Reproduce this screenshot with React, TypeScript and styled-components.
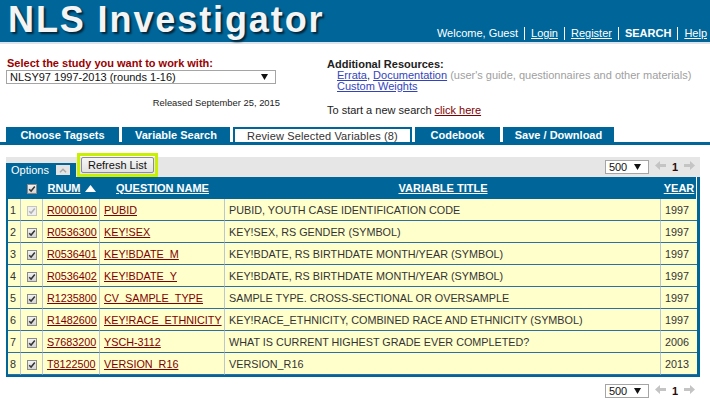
import React from "react";
import styled, { createGlobalStyle } from "styled-components";

const BLUE = "#006699";

const GlobalStyle = createGlobalStyle`
  *, *::before, *::after { box-sizing: border-box; }
  html, body { margin: 0; padding: 0; background: #fff; }
  body {
    font-family: "Liberation Sans", Arial, Helvetica, sans-serif;
    font-size: 11px;
    color: #222;
  }
`;

const Page = styled.div`
  width: 710px;
`;

/* ---------- Header ---------- */
const Header = styled.header`
  height: 44px;
  background: ${BLUE};
  border-bottom: 2px solid #dde3ea;
  display: flex;
  justify-content: space-between;
  align-items: flex-start;
  padding: 0 3px 0 8px;
`;

const Title = styled.h1`
  margin: 0;
  font-family: "Liberation Sans", Arial, sans-serif;
  font-weight: bold;
  font-size: 36px;
  line-height: 39px;
  letter-spacing: 1.9px;
  color: #f4f4f4;
  text-shadow: 2px 2px 2px #00263d;
`;

const TopNav = styled.nav`
  align-self: flex-end;
  margin-bottom: 2px;
  display: flex;
  align-items: center;
  color: #fff;
  font-size: 11px;
  line-height: 13px;
`;

const NavLink = styled.a<{ $bold?: boolean }>`
  color: #fff;
  text-decoration: ${(p) => (p.$bold ? "none" : "underline")};
  font-weight: ${(p) => (p.$bold ? "bold" : "normal")};
`;

const NavSep = styled.span`
  width: 1px;
  height: 13px;
  background: #fff;
  margin: 0 6px;
`;

/* ---------- Study selection ---------- */
const StudyRow = styled.section`
  height: 83px;
  display: flex;
  padding: 13px 0 0 6px;
`;

const LeftCol = styled.div`
  width: 321px;
  display: flex;
  flex-direction: column;
`;

const StudyLabel = styled.div`
  color: #990000;
  font-weight: bold;
  line-height: 13px;
  padding-left: 1px;
`;

const FakeSelect = styled.div<{ $w: number }>`
  width: ${(p) => p.$w}px;
  height: 14px;
  border: 1px solid #a5a5a5;
  background: #fff;
  display: flex;
  align-items: center;
  justify-content: space-between;
  padding: 0 7px 0 3px;
  font-size: 11px;
  line-height: 12px;
  color: #111;
`;

const Released = styled.div`
  width: 274px;
  margin-top: 12px;
  text-align: right;
  font-size: 9.4px;
  line-height: 13px;
  color: #222;
`;

const RightCol = styled.div`
  padding-top: 2px;
  line-height: 11px;
  color: #222;
`;

const ResTitle = styled.div`
  font-weight: bold;
`;

const ResLine = styled.div`
  padding-left: 10px;
`;

const BlueLink = styled.a`
  color: #3344bb;
  text-decoration: underline;
`;

const Muted = styled.span`
  color: #a0a0a0;
`;

const NewSearch = styled.div`
  margin-top: 13px;
`;

const RedLink = styled.a`
  color: #800000;
  text-decoration: underline;
`;

/* ---------- Tabs ---------- */
const TabBar = styled.nav`
  display: flex;
  gap: 3px;
  padding-left: 6px;
  border-bottom: 3px solid ${BLUE};
`;

const Tab = styled.div<{ $active?: boolean; $w: number }>`
  width: ${(p) => p.$w}px;
  height: 15px;
  display: flex;
  align-items: center;
  justify-content: center;
  font-size: 11px;
  letter-spacing: ${(p) => (p.$active ? "0.15px" : "0")};
  font-weight: ${(p) => (p.$active ? "normal" : "bold")};
  color: ${(p) => (p.$active ? "#333" : "#fff")};
  background: ${(p) => (p.$active ? "#fff" : BLUE)};
  border: ${(p) => (p.$active ? `2px solid ${BLUE}` : "none")};
  border-bottom: none;
`;

/* ---------- Panel ---------- */
const Panel = styled.div`
  width: 694px;
  margin: 12px 0 0 6px;
`;

const OptionsBar = styled.div`
  height: 20px;
  background: #e6e6e6;
  display: flex;
  align-items: flex-end;
`;

const OptionsTab = styled.div`
  width: 70px;
  height: 14px;
  background: ${BLUE};
  color: #fff;
  display: flex;
  align-items: center;
  gap: 7px;
  padding-left: 5px;
  font-size: 11px;
`;

const CollapseBtn = styled.span`
  width: 14px;
  height: 10px;
  background: #e4e4e4;
  display: flex;
  align-items: center;
  justify-content: center;
`;

const RefreshFrame = styled.div`
  margin-left: 1px;
  height: 24px;
  border: 3px solid #c8f000;
  padding: 1px;
  display: flex;
  align-items: center;
`;

const RefreshButton = styled.button`
  height: 16px;
  padding: 0 6px;
  font-family: "Liberation Sans", Arial, sans-serif;
  font-size: 11px;
  color: #111;
  border: 1px solid #8c8c8c;
  border-radius: 2px;
  background: linear-gradient(#f6f6f6, #e2e2e2);
  line-height: 13px;
`;

const Pager = styled.div<{ $top?: boolean }>`
  margin-left: auto;
  align-self: ${(p) => (p.$top ? "center" : "auto")};
  display: flex;
  align-items: center;
  padding-right: 5px;
`;

const BottomRow = styled.div`
  display: flex;
  margin-top: 7px;
`;

const PageNum = styled.span`
  font-weight: bold;
  font-size: 11px;
  color: #2a0a0a;
  margin: 0 6px;
  line-height: 13px;
`;

const ArrowIcon = styled.svg`
  display: block;
  margin-top: -3px;
`;

const Spacer = styled.span`
  width: 6px;
`;

/* ---------- Table ---------- */
const Table = styled.table`
  width: 694px;
  table-layout: fixed;
  border-collapse: separate;
  border-spacing: 0;
  border-left: 2px solid ${BLUE};
  border-right: 3px solid ${BLUE};
  border-bottom: 2px solid ${BLUE};
  background: #ffffcc;
`;

const Th = styled.th<{ $w: number; $last?: boolean }>`
  width: ${(p) => p.$w}px;
  height: 22px;
  padding: 0;
  background: ${BLUE};
  color: #fff;
  font-weight: bold;
  font-size: 11px;
  text-align: center;
  vertical-align: middle;
  box-shadow: ${(p) => (p.$last ? "inset -1px 0 #ffffff" : "none")};
`;

const HeadLink = styled.a`
  color: #fff;
  text-decoration: underline;
`;

const HeadInner = styled.span`
  display: inline-flex;
  align-items: center;
  gap: 4px;
`;

const Td = styled.td<{ $last?: boolean; $pad?: number }>`
  height: 22px;
  padding: 0 ${(p) => p.$pad ?? 4}px;
  border-bottom: 1px solid #2f6f9f;
  border-right: ${(p) => (p.$last ? "none" : "1px solid #bcc6d0")};
  color: #333;
  font-size: 10.8px;
  white-space: nowrap;
  overflow: hidden;
  vertical-align: middle;
`;

const CheckTd = styled(Td)`
  text-align: center;
  padding: 0;
`;

const CellLink = styled.a`
  color: #800000;
  text-decoration: underline;
`;

const Box = styled.span<{ $disabled?: boolean }>`
  display: inline-flex;
  align-items: center;
  justify-content: center;
  width: 10px;
  height: 10px;
  vertical-align: middle;
  border: 1px solid ${(p) => (p.$disabled ? "#c4c4c4" : "#8a8a8a")};
  background: ${(p) =>
    p.$disabled ? "#efefef" : "linear-gradient(#f2f2f2, #d4d4d4)"};
`;

const CheckBox = ({ disabled }: { disabled?: boolean }) => (
  <Box $disabled={disabled}>
    <svg width="8" height="8" viewBox="0 0 8 8">
      <path
        d="M1.2 4.2 L3.1 6.1 L6.8 1.6"
        fill="none"
        stroke={disabled ? "#b0b0b0" : "#333"}
        strokeWidth="1.5"
      />
    </svg>
  </Box>
);

const DownTri = () => (
  <svg width="7" height="6" viewBox="0 0 7 6">
    <polygon points="0,0 7,0 3.5,6" fill="#111" />
  </svg>
);

const Arrow = ({ dir }: { dir: "l" | "r" }) => (
  <ArrowIcon width="11" height="9" viewBox="0 0 11 9">
    <polygon
      points={
        dir === "l"
          ? "0,4.5 5,0 5,3 11,3 11,6 5,6 5,9"
          : "11,4.5 6,0 6,3 0,3 0,6 6,6 6,9"
      }
      fill="#c4c4c4"
    />
  </ArrowIcon>
);

const PagerBlock = ({ top }: { top?: boolean }) => (
  <Pager $top={top}>
    <FakeSelect $w={44}>
      <span>500</span>
      <DownTri />
    </FakeSelect>
    <Spacer />
    <Arrow dir="l" />
    <PageNum>1</PageNum>
    <Arrow dir="r" />
  </Pager>
);

type Row = {
  n: number;
  rnum: string;
  qname: string;
  title: string;
  year: string;
};

const rows: Row[] = [
  { n: 1, rnum: "R0000100", qname: "PUBID", title: "PUBID, YOUTH CASE IDENTIFICATION CODE", year: "1997" },
  { n: 2, rnum: "R0536300", qname: "KEY!SEX", title: "KEY!SEX, RS GENDER (SYMBOL)", year: "1997" },
  { n: 3, rnum: "R0536401", qname: "KEY!BDATE_M", title: "KEY!BDATE, RS BIRTHDATE MONTH/YEAR (SYMBOL)", year: "1997" },
  { n: 4, rnum: "R0536402", qname: "KEY!BDATE_Y", title: "KEY!BDATE, RS BIRTHDATE MONTH/YEAR (SYMBOL)", year: "1997" },
  { n: 5, rnum: "R1235800", qname: "CV_SAMPLE_TYPE", title: "SAMPLE TYPE. CROSS-SECTIONAL OR OVERSAMPLE", year: "1997" },
  { n: 6, rnum: "R1482600", qname: "KEY!RACE_ETHNICITY", title: "KEY!RACE_ETHNICITY, COMBINED RACE AND ETHNICITY (SYMBOL)", year: "1997" },
  { n: 7, rnum: "S7683200", qname: "YSCH-3112", title: "WHAT IS CURRENT HIGHEST GRADE EVER COMPLETED?", year: "2006" },
  { n: 8, rnum: "T8122500", qname: "VERSION_R16", title: "VERSION_R16", year: "2013" },
];

export default function App() {
  return (
    <Page>
      <GlobalStyle />
      <Header>
        <Title>NLS Investigator</Title>
        <TopNav>
          <span>Welcome, Guest</span>
          <NavSep />
          <NavLink href="#">Login</NavLink>
          <NavSep />
          <NavLink href="#">Register</NavLink>
          <NavSep />
          <NavLink $bold href="#">SEARCH</NavLink>
          <NavSep />
          <NavLink href="#">Help</NavLink>
        </TopNav>
      </Header>

      <StudyRow>
        <LeftCol>
          <StudyLabel>Select the study you want to work with:</StudyLabel>
          <FakeSelect $w={270}>
            <span>NLSY97 1997-2013 (rounds 1-16)</span>
            <DownTri />
          </FakeSelect>
          <Released>Released September 25, 2015</Released>
        </LeftCol>
        <RightCol>
          <ResTitle>Additional Resources:</ResTitle>
          <ResLine>
            <BlueLink href="#">Errata</BlueLink>,{" "}
            <BlueLink href="#">Documentation</BlueLink>{" "}
            <Muted>(user's guide, questionnaires and other materials)</Muted>
          </ResLine>
          <ResLine>
            <BlueLink href="#">Custom Weights</BlueLink>
          </ResLine>
          <NewSearch>
            To start a new search <RedLink href="#">click here</RedLink>
          </NewSearch>
        </RightCol>
      </StudyRow>

      <TabBar>
        <Tab $w={113}>Choose Tagsets</Tab>
        <Tab $w={108}>Variable Search</Tab>
        <Tab $w={179} $active>
          Review Selected Variables (8)
        </Tab>
        <Tab $w={85}>Codebook</Tab>
        <Tab $w={111}>Save / Download</Tab>
      </TabBar>

      <Panel>
        <OptionsBar>
          <OptionsTab>
            Options
            <CollapseBtn>
              <svg width="8" height="5" viewBox="0 0 8 5">
                <polyline points="1,4.2 4,1.2 7,4.2" fill="none" stroke="#a8a8a8" strokeWidth="1.4" />
              </svg>
            </CollapseBtn>
          </OptionsTab>
          <RefreshFrame>
            <RefreshButton>Refresh List</RefreshButton>
          </RefreshFrame>
          <PagerBlock top />
        </OptionsBar>

        <Table>
          <thead>
            <tr>
              <Th $w={13} />
              <Th $w={22}>
                <CheckBox />
              </Th>
              <Th $w={57}>
                <HeadInner>
                  <HeadLink href="#">RNUM</HeadLink>
                  <svg width="11" height="7" viewBox="0 0 11 7">
                    <polygon points="0,7 11,7 5.5,0" fill="#fff" />
                  </svg>
                </HeadInner>
              </Th>
              <Th $w={125}>
                <HeadLink href="#">QUESTION NAME</HeadLink>
              </Th>
              <Th $w={436}>
                <HeadLink href="#">VARIABLE TITLE</HeadLink>
              </Th>
              <Th $w={36} $last>
                <HeadLink href="#">YEAR</HeadLink>
              </Th>
            </tr>
          </thead>
          <tbody>
            {rows.map((r) => (
              <tr key={r.n}>
                <Td $pad={2}>{r.n}</Td>
                <CheckTd>
                  <CheckBox disabled={r.n === 1} />
                </CheckTd>
                <Td>
                  <CellLink href="#">{r.rnum}</CellLink>
                </Td>
                <Td>
                  <CellLink href="#">{r.qname}</CellLink>
                </Td>
                <Td>{r.title}</Td>
                <Td $last>{r.year}</Td>
              </tr>
            ))}
          </tbody>
        </Table>

        <BottomRow>
          <PagerBlock />
        </BottomRow>
      </Panel>
    </Page>
  );
}
